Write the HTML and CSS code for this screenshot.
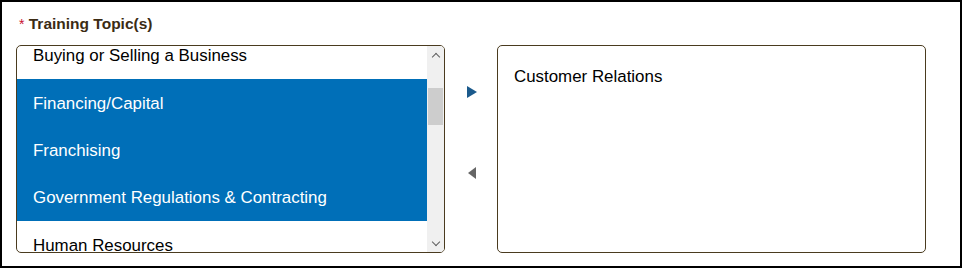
FILE: index.html
```html
<!DOCTYPE html>
<html lang="en">
<head>
    <meta charset="UTF-8">
    <meta name="viewport" content="width=device-width, initial-scale=1.0">
    <title>Training Topics</title>
    <link rel="stylesheet" href="styles.css">
</head>
<body>

    <div class="field">
        <div class="field-label"><span class="required">*</span> Training Topic(s)</div>

        <div class="picker">
            <!-- available topics -->
            <div class="listbox">
                <div class="options">
                    <div class="option">Buying or Selling a Business</div>
                    <div class="option selected">Financing/Capital</div>
                    <div class="option selected">Franchising</div>
                    <div class="option selected">Government Regulations &amp; Contracting</div>
                    <div class="option">Human Resources</div>
                </div>
                <div class="scrollbar">
                    <span class="scroll-arrow up"></span>
                    <div class="track"><div class="thumb"></div></div>
                    <span class="scroll-arrow down"></span>
                </div>
            </div>

            <div class="movers">
                <button class="move move-right" aria-label="Add"></button>
                <button class="move move-left" aria-label="Remove"></button>
            </div>

            <!-- chosen topics -->
            <div class="chosen">
                <div class="chosen-item">Customer Relations</div>
            </div>
        </div>
    </div>

</body>
</html>
```

FILE: styles.css
```css
body {
    margin: 0;
    padding: 0;
    font-family: "Liberation Sans", Arial, sans-serif;
}

.field {
    box-sizing: border-box;
    width: 962px;
    height: 268px;
    border: 2px solid #000;
    padding: 13px 14px 0 14px;
}

.field-label {
    font-size: 15.5px;
    font-weight: bold;
    color: #3b2b14;
    line-height: 17px;
    margin-left: 3px;
}

.required {
    color: #c8102e;
    font-weight: normal;
    font-size: 14px;
}

.picker {
    display: flex;
    margin-top: 12px;
}

.listbox {
    box-sizing: border-box;
    width: 429px;
    height: 208px;
    border: 1px solid #4a3b1f;
    border-radius: 5px;
    display: flex;
    overflow: hidden;
}

.options {
    flex: 1;
    overflow: hidden;
}

.option {
    box-sizing: border-box;
    height: 47.33px;
    display: flex;
    align-items: center;
    padding: 2px 0 0 16px;
    font-size: 16.9px;
    color: #000;
}

.option:first-child {
    margin-top: -14.3px;
}

.option.selected {
    background: #006fb8;
    color: #fff;
}

.scrollbar {
    width: 17px;
    background: #f0f0f0;
    display: flex;
    flex-direction: column;
}

.scroll-arrow {
    height: 17px;
    display: flex;
    justify-content: center;
    align-items: center;
}

.scroll-arrow::before {
    content: "";
    width: 5px;
    height: 5px;
    border-left: 1.5px solid #606060;
    border-top: 1.5px solid #606060;
}

.scroll-arrow.up::before {
    transform: translateY(2px) rotate(45deg);
}

.scroll-arrow.down::before {
    transform: translateY(-2px) rotate(225deg);
}

.track {
    flex: 1;
    padding: 25px 1px 0 1px;
}

.thumb {
    height: 37px;
    background: #cdcdcd;
}

.movers {
    width: 52px;
    display: flex;
    flex-direction: column;
    align-items: center;
    padding-top: 40px;
    gap: 68px;
}

.move {
    width: 12px;
    height: 13px;
    border: none;
    padding: 0;
    background: none;
    display: flex;
    justify-content: center;
    align-items: center;
}

.move::before {
    content: "";
    border-top: 6.5px solid transparent;
    border-bottom: 6.5px solid transparent;
}

.move-right::before {
    border-left: 10px solid #1b5a8c;
    margin-left: 1px;
}

.move-left::before {
    border-right: 8px solid #666;
    margin-left: 1px;
}

.chosen {
    box-sizing: border-box;
    width: 429px;
    height: 208px;
    border: 1px solid #4a3b1f;
    border-radius: 5px;
    padding: 21px 16px 0 16px;
}

.chosen-item {
    font-size: 16.9px;
    line-height: 19px;
    color: #000;
}
```
